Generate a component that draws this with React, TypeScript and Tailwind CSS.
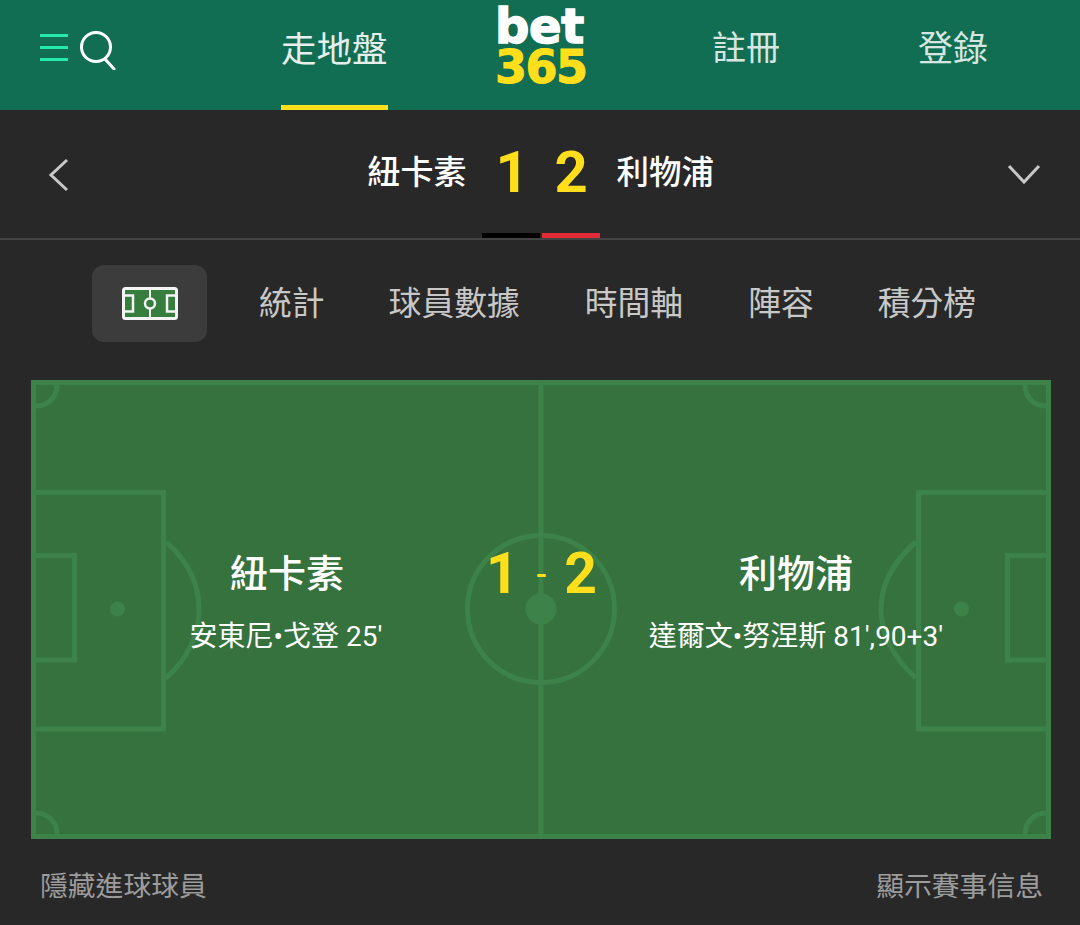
const cjk = "font-['Roboto','Noto_Sans_CJK_TC','Noto_Sans',sans-serif]"

function Pitch() {
  const line = "#3c8249"
  return (
    <svg className="absolute inset-0" width="1020" height="459" viewBox="0 0 1020 459" fill="none" stroke={line} strokeWidth="5">
      <rect x="2.5" y="2.5" width="1015" height="454" />
      <line x1="510" y1="0" x2="510" y2="459" />
      <circle cx="510" cy="229" r="73.5" />
      <circle cx="510" cy="229" r="15.5" fill={line} stroke="none" />

      {/* left end */}
      <path d="M5 112.5H132.5V349H5" />
      <path d="M5 175.5H43.5V280H5" />
      <circle cx="86.5" cy="229" r="7.5" fill={line} stroke="none" />
      <path d="M135 162C158 182 168 205 168 229C168 253 158 278 135 298" />

      {/* right end */}
      <path d="M1015 112.5H887.5V349H1015" />
      <path d="M1015 175.5H976.5V280H1015" />
      <circle cx="930.5" cy="229" r="7.5" fill={line} stroke="none" />
      <path d="M885 162C862 182 850 205 850 229C850 253 862 278 885 298" />

      {/* corners */}
      <path d="M26 5C26 17 17 26 5 26" />
      <path d="M994 5C994 17 1003 26 1015 26" />
      <path d="M5 433C17 433 26 442 26 454" />
      <path d="M1015 433C1003 433 994 442 994 454" />
    </svg>
  )
}

function PitchIcon() {
  return (
    <svg width="56" height="33" viewBox="0 0 56 33" fill="none">
      <rect x="1.5" y="1.5" width="53" height="30" rx="2" fill="#367d3e" stroke="#f4f4f4" strokeWidth="3" />
      <line x1="28" y1="2" x2="28" y2="31" stroke="#f4f4f4" strokeWidth="2" />
      <circle cx="28" cy="16.5" r="5" fill="#367d3e" stroke="#f4f4f4" strokeWidth="2.5" />
      <path d="M2 8.5H11V24.5H2" stroke="#f4f4f4" strokeWidth="2.5" />
      <path d="M54 8.5H45V24.5H54" stroke="#f4f4f4" strokeWidth="2.5" />
    </svg>
  )
}

export default function App() {
  const tabs = [
    { label: "統計", ml: "ml-[52px]" },
    { label: "球員數據", ml: "ml-[64px]" },
    { label: "時間軸", ml: "ml-[65px]" },
    { label: "陣容", ml: "ml-[65px]" },
    { label: "積分榜", ml: "ml-[64px]" },
  ]

  return (
    <div className={`w-[1080px] h-[925px] overflow-hidden bg-[#282828] ${cjk}`}>
      {/* Top nav */}
      <header className="h-[110px] bg-[#126e53] flex pl-10 relative">
        <div className="flex items-start pt-[31px]">
          <div className="w-7 mt-[3px] flex flex-col gap-[9px]">
            <div className="h-[3px] bg-[#26e8a8]"></div>
            <div className="h-[3px] bg-[#26e8a8]"></div>
            <div className="h-[3px] bg-[#26e8a8]"></div>
          </div>
          <svg className="ml-3" width="37" height="39" viewBox="0 0 37 39" fill="none" stroke="#fff" strokeWidth="3" strokeLinecap="round">
            <circle cx="16" cy="16" r="14.5" />
            <line x1="25" y1="28" x2="34" y2="38" />
          </svg>
        </div>
        <div className="ml-[164px] w-[107px] h-[110px] border-b-[5px] border-[#ffdf1b] text-[35.5px] leading-[50px] pt-[25px] text-[#e6efeb] whitespace-nowrap">走地盤</div>
        <div className="ml-[107px] w-[93px] flex flex-col font-['DejaVu_Sans',sans-serif] font-bold">
          <span className="text-[48px] leading-[40px] mt-[6px] text-white tracking-[-0.3px] [-webkit-text-stroke:1.5px_#fff]">bet</span>
          <span className="text-[46px] leading-[38px] mt-[2px] text-[#ffdf1b] tracking-[-1.5px] [-webkit-text-stroke:1px_#ffdf1b]">365</span>
        </div>
        <div className="ml-[124px] text-[34px] leading-[50px] pt-[23px] text-[#d7e6e0]">註冊</div>
        <div className="ml-[138px] text-[35px] leading-[50px] pt-[25px] text-[#d7e6e0]">登錄</div>
      </header>

      {/* Score bar */}
      <div className="h-[130px] border-b-2 border-[#444] relative flex items-start justify-center">
        <svg className="absolute left-[47px] top-[48px]" width="22" height="34" viewBox="0 0 22 34" fill="none" stroke="#c8c8c8" strokeWidth="3">
          <path d="M20 2L4 17L20 32" />
        </svg>
        <svg className="absolute left-[1007px] top-[53px]" width="34" height="22" viewBox="0 0 34 22" fill="none" stroke="#c8c8c8" strokeWidth="3">
          <path d="M2 3L17 19L32 3" />
        </svg>
        <div className="flex items-center pl-[1px] h-[124px]">
          <span className="text-[33px] font-medium text-white w-[98px] whitespace-nowrap pt-[2px] ml-[1px]">紐卡素</span>
          <span className="text-[58px] font-bold text-[#ffdf1b] ml-[30px] w-[28px] text-center">1</span>
          <span className="text-[58px] font-bold text-[#ffdf1b] ml-[31px] w-[32px] text-center">2</span>
          <span className="text-[32.5px] font-medium text-white ml-[30px] w-[98px] whitespace-nowrap pt-[2px]">利物浦</span>
        </div>
        <div className="absolute left-[482px] bottom-0 flex gap-[2px]">
          <div className="w-[58px] h-[5px] bg-black"></div>
          <div className="w-[58px] h-[5px] bg-[#e42c38]"></div>
        </div>
      </div>

      {/* Tabs */}
      <nav className="flex items-center pl-[92px] mt-[25px] h-[77px]">
        <div className="w-[115px] h-[77px] rounded-xl bg-[#3c3c3c] flex items-center justify-center">
          <PitchIcon />
        </div>
        {tabs.map((tab) => (
          <span key={tab.label} className={`${tab.ml} text-[32.8px] text-[#c8c8c8] whitespace-nowrap pt-[2px]`}>{tab.label}</span>
        ))}
      </nav>

      {/* Pitch */}
      <section className="relative w-[1020px] h-[459px] ml-[31px] mt-[38px] bg-[#36723e]">
        <Pitch />
        <div className="relative grid grid-cols-[510px_510px] text-white">
          <div className="flex flex-col items-center pt-[166px] pl-[2px]">
            <div className="text-[38px] font-medium leading-[56px]">紐卡素</div>
            <div className="text-[28px] leading-[40px] mt-[15px] whitespace-nowrap pr-[2px]">安東尼•戈登 25'</div>
          </div>
          <div className="flex flex-col items-center pt-[166px]">
            <div className="text-[38px] font-medium leading-[56px]">利物浦</div>
            <div className="text-[28px] leading-[40px] mt-[15px] whitespace-nowrap">達爾文•努涅斯 81',90+3'</div>
          </div>
        </div>
        <div className="absolute left-[455px] top-[154px] w-[111px] flex justify-between items-center text-[#ffdf1b] font-bold text-[57px] leading-[80px]">
          <span>1</span>
          <span className="text-[32px] font-medium">-</span>
          <span>2</span>
        </div>
      </section>

      {/* Footer links */}
      <div className="flex justify-between pl-10 pr-[37px] mt-[28px] text-[27.8px] leading-[40px] text-[#9c9c9c]">
        <span>隱藏進球球員</span>
        <span>顯示賽事信息</span>
      </div>
    </div>
  )
}
